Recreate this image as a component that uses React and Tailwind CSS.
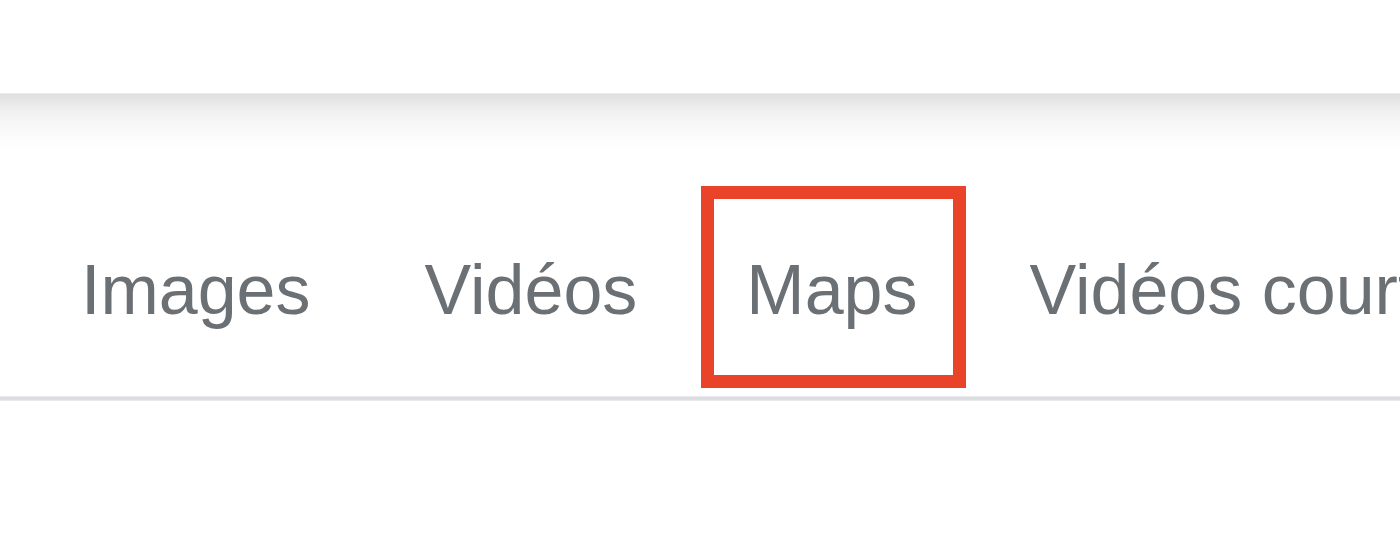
export default function App() {
  return (
    <div className="w-[1400px] h-[560px] bg-white overflow-hidden" style={{ fontFamily: '"Liberation Sans", Arial, sans-serif' }}>
      <div className="h-[93px] bg-white" />
      <div className="h-px bg-[#ebebeb]" />
      <div className="h-[60px] bg-[linear-gradient(to_bottom,#dedfdf,#ececec_20%,#f6f6f6_45%,#fcfcfc_75%,#ffffff)]" />
      <div className="pt-[101px] pb-[71px]">
        <div className="flex items-start whitespace-nowrap text-[70px] leading-[70px] text-[#6b7075]">
          <span className="ml-[81px]">Images</span>
          <span className="ml-[114px]">Vidéos</span>
          <span className="relative ml-[109px]">
            Maps
            <span className="absolute left-[-45px] top-[-69px] w-[265px] h-[202px] border-[13px] border-[#e9432a]" />
          </span>
          <span className="ml-[112px]">Vidéos courtes</span>
        </div>
      </div>
      <div className="h-[5px] bg-[linear-gradient(to_bottom,#eeeff1,#dadce0_35%,#dadce0_65%,#eeeff1)]" />
    </div>
  );
}
